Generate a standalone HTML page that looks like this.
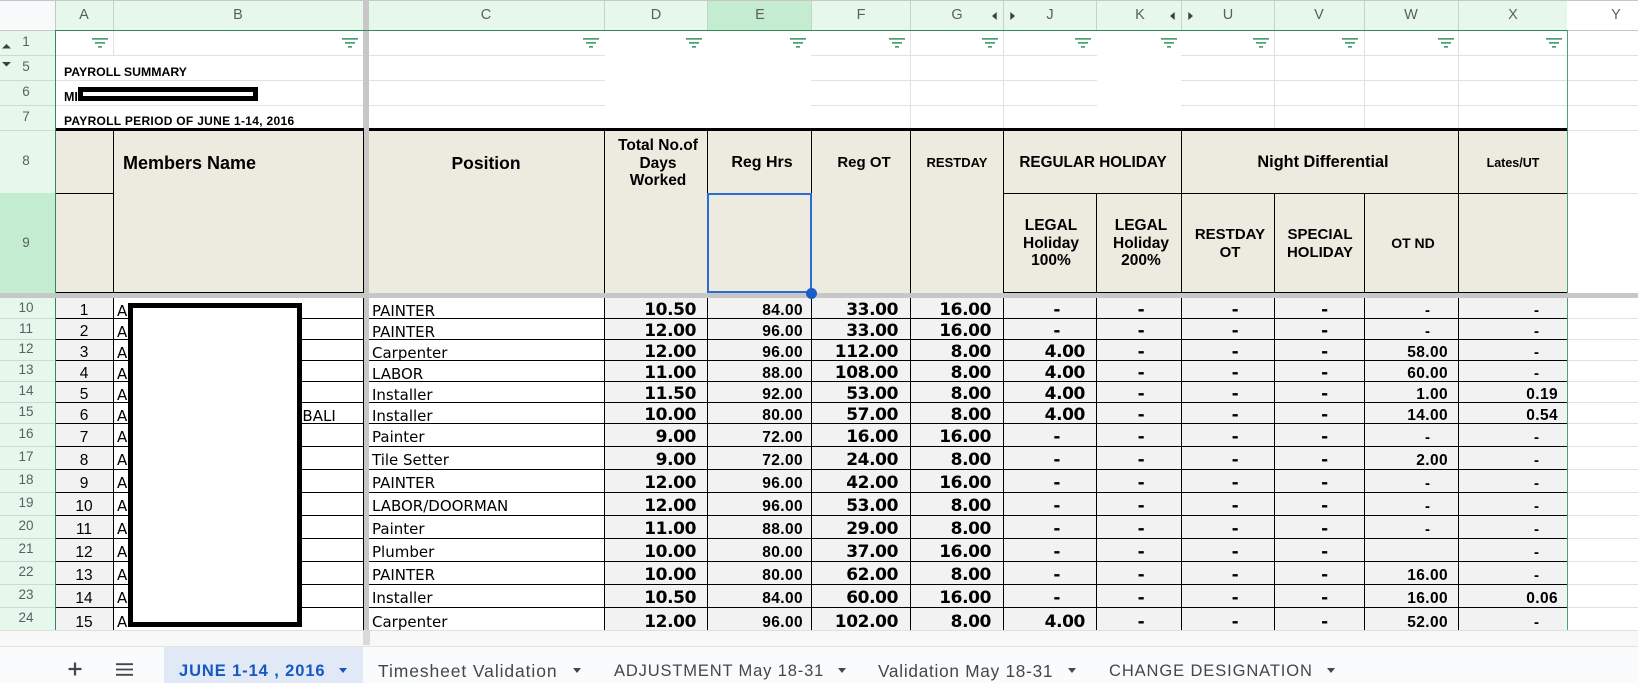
<!DOCTYPE html>
<html><head><meta charset="utf-8"><style>
html,body{margin:0;padding:0;background:#fff;width:1638px;height:683px;overflow:hidden}
body{position:relative;font-family:"Liberation Sans",sans-serif;color:#000}
div,span.t,svg{position:absolute}
.r{background:#e1e1e1}
.k{background:#000}
.t{white-space:nowrap;line-height:1;position:absolute}
.ch{top:8px;font-size:14.5px;color:#5b5f62;width:40px;text-align:center}
.rn{left:6px;width:40px;text-align:center;font-size:13.5px;color:#5b5f62;line-height:16px}
.b{font-weight:bold}
.hc{text-align:center;width:200px;font-weight:bold;font-size:15.5px;line-height:17.5px;white-space:nowrap}
table{position:absolute;left:55px;top:298px;border-collapse:separate;border-spacing:0;table-layout:fixed;width:1512px}
td{padding:0;border-bottom:1px solid #000;border-right:1px solid #000;background:#f2f2f2;vertical-align:bottom;line-height:14px;white-space:nowrap;overflow:hidden;box-sizing:border-box;text-align:right;font-weight:bold;font-size:17px;letter-spacing:-.4px;font-family:"DejaVu Sans",sans-serif}
tr.s td{height:21px;padding-bottom:1px}
tr.l td{height:23px;padding-bottom:2px}
tr.z td{height:23px;padding-bottom:2px;border-bottom:0}
td.a{text-align:center;letter-spacing:0;font:15.5px/14px "Liberation Sans",sans-serif}
td.n{background:#fff;text-align:left;padding-left:3px;letter-spacing:0;font:15px/14px "DejaVu Sans",sans-serif}
td.g{background:#c7c7c7;border:0}
td.dd{padding-right:11px}
td.e{padding-right:8px;font:bold 15.5px/14px "Liberation Sans",sans-serif;letter-spacing:.4px}
td.f{padding-right:12px}
td.gg{padding-right:12px}
td.j{padding-right:11px}
td.jd{padding-right:36px}
td.kk{text-align:center;padding-left:4px}
td.u{text-align:center;padding-left:14px}
td.v{text-align:center;padding-left:10px}
td.w{padding-right:10px;font:bold 15.5px/14px "Liberation Sans",sans-serif;letter-spacing:.4px}
td.wd{padding-right:28px;letter-spacing:0;font:bold 15px/14px "Liberation Sans",sans-serif}
td.x{padding-right:9px;border-right:0;font:bold 15.5px/14px "Liberation Sans",sans-serif;letter-spacing:.4px}
td.xd{padding-right:28px;border-right:0;letter-spacing:0;font:bold 15px/14px "Liberation Sans",sans-serif}
tr.s td.a,tr.s td.n,tr.s td.e,tr.s td.w,tr.s td.x,tr.s td.wd,tr.s td.xd{padding-bottom:0}
tr.l td.a,tr.l td.e,tr.l td.w,tr.l td.x,tr.l td.wd,tr.l td.xd,tr.z td.a,tr.z td.e,tr.z td.w,tr.z td.x,tr.z td.wd,tr.z td.xd{padding-bottom:1px}
tr.l td.n,tr.z td.n{padding-bottom:2px}
.tab{position:absolute;top:661px;font-size:16.5px;color:#444746;white-space:nowrap;line-height:20px}
.ar{width:0;height:0;border-left:4.5px solid transparent;border-right:4.5px solid transparent;border-top:5px solid #444746;top:668px}
</style></head><body>

<!-- column header -->
<div style="left:0;top:0;width:1638px;height:1px;background:#c7c7c7"></div>
<div style="left:0;top:1px;width:55px;height:29px;background:#f8f9fa"></div>
<div style="left:55px;top:1px;width:1512px;height:29px;background:#e6f7ec"></div>
<div style="left:708px;top:1px;width:103px;height:29px;background:#c3ecd0"></div>
<div style="left:0;top:30px;width:55px;height:1px;background:#c7c7c7"></div>
<div style="left:1567px;top:30px;width:71px;height:1px;background:#c7c7c7"></div>
<div style="left:55px;top:1px;width:1px;height:29px;background:#c4c8c6"></div>
<div style="left:113px;top:1px;width:1px;height:29px;background:#c4d4ca"></div>
<div style="left:604px;top:1px;width:1px;height:29px;background:#c4d4ca"></div>
<div style="left:707px;top:1px;width:1px;height:29px;background:#c4d4ca"></div>
<div style="left:811px;top:1px;width:1px;height:29px;background:#c4d4ca"></div>
<div style="left:910px;top:1px;width:1px;height:29px;background:#c4d4ca"></div>
<div style="left:1003px;top:1px;width:1px;height:29px;background:#c4d4ca"></div>
<div style="left:1096px;top:1px;width:1px;height:29px;background:#c4d4ca"></div>
<div style="left:1181px;top:1px;width:1px;height:29px;background:#c4d4ca"></div>
<div style="left:1274px;top:1px;width:1px;height:29px;background:#c4d4ca"></div>
<div style="left:1364px;top:1px;width:1px;height:29px;background:#c4d4ca"></div>
<div style="left:1458px;top:1px;width:1px;height:29px;background:#c4d4ca"></div>
<div style="left:363px;top:0;width:6px;height:293px;background:#c7c7c7"></div>

<span class="t ch" style="left:64px">A</span>
<span class="t ch" style="left:218px">B</span>
<span class="t ch" style="left:466px">C</span>
<span class="t ch" style="left:636px">D</span>
<span class="t ch" style="left:740px">E</span>
<span class="t ch" style="left:841px">F</span>
<span class="t ch" style="left:937px">G</span>
<span class="t ch" style="left:1030px">J</span>
<span class="t ch" style="left:1120px">K</span>
<span class="t ch" style="left:1208px">U</span>
<span class="t ch" style="left:1299px">V</span>
<span class="t ch" style="left:1391px">W</span>
<span class="t ch" style="left:1493px">X</span>
<span class="t ch" style="left:1596px">Y</span>

<svg style="left:992px;top:12px" width="5" height="8"><path d="M4.7 0V8L0 4z" fill="#3c4043"/></svg>
<svg style="left:1010px;top:12px" width="5" height="8"><path d="M.3 0V8L5 4z" fill="#3c4043"/></svg>
<svg style="left:1170px;top:12px" width="5" height="8"><path d="M4.7 0V8L0 4z" fill="#3c4043"/></svg>
<svg style="left:1188px;top:12px" width="5" height="8"><path d="M.3 0V8L5 4z" fill="#3c4043"/></svg>

<!-- row header -->
<div style="left:0;top:31px;width:55px;height:600px;background:#e6f7ec"></div>
<div style="left:0;top:193px;width:55px;height:100px;background:#c3ecd0"></div>
<div style="left:0;top:55px;width:55px;height:1px;background:#c9dccf"></div>
<div style="left:0;top:80px;width:55px;height:1px;background:#c9dccf"></div>
<div style="left:0;top:105px;width:55px;height:1px;background:#c9dccf"></div>
<div style="left:0;top:130px;width:55px;height:1px;background:#c9dccf"></div>
<div style="left:0;top:318px;width:55px;height:1px;background:#c9dccf"></div>
<div style="left:0;top:339px;width:55px;height:1px;background:#c9dccf"></div>
<div style="left:0;top:360px;width:55px;height:1px;background:#c9dccf"></div>
<div style="left:0;top:381px;width:55px;height:1px;background:#c9dccf"></div>
<div style="left:0;top:402px;width:55px;height:1px;background:#c9dccf"></div>
<div style="left:0;top:423px;width:55px;height:1px;background:#c9dccf"></div>
<div style="left:0;top:446px;width:55px;height:1px;background:#c9dccf"></div>
<div style="left:0;top:469px;width:55px;height:1px;background:#c9dccf"></div>
<div style="left:0;top:492px;width:55px;height:1px;background:#c9dccf"></div>
<div style="left:0;top:515px;width:55px;height:1px;background:#c9dccf"></div>
<div style="left:0;top:538px;width:55px;height:1px;background:#c9dccf"></div>
<div style="left:0;top:561px;width:55px;height:1px;background:#c9dccf"></div>
<div style="left:0;top:584px;width:55px;height:1px;background:#c9dccf"></div>
<div style="left:0;top:607px;width:55px;height:1px;background:#c9dccf"></div>

<span class="t rn" style="top:34px">1</span>
<span class="t rn" style="top:59px">5</span>
<span class="t rn" style="top:84px">6</span>
<span class="t rn" style="top:109px">7</span>
<span class="t rn" style="top:153px">8</span>
<span class="t rn" style="top:235px">9</span>
<span class="t rn" style="top:300px">10</span>
<span class="t rn" style="top:321px">11</span>
<span class="t rn" style="top:341px">12</span>
<span class="t rn" style="top:362px">13</span>
<span class="t rn" style="top:383px">14</span>
<span class="t rn" style="top:404px">15</span>
<span class="t rn" style="top:426px">16</span>
<span class="t rn" style="top:449px">17</span>
<span class="t rn" style="top:472px">18</span>
<span class="t rn" style="top:495px">19</span>
<span class="t rn" style="top:518px">20</span>
<span class="t rn" style="top:541px">21</span>
<span class="t rn" style="top:564px">22</span>
<span class="t rn" style="top:587px">23</span>
<span class="t rn" style="top:610px">24</span>

<svg style="left:2px;top:44px" width="10" height="5"><path d="M0 4.5H9L4.5 0z" fill="#3c4043"/></svg>
<svg style="left:2px;top:62px" width="10" height="5"><path d="M0 0H9L4.5 4.5z" fill="#3c4043"/></svg>

<!-- top gridlines -->
<div class="r" style="left:113px;top:31px;width:1px;height:24px"></div>
<div class="r" style="left:910px;top:31px;width:1px;height:97px"></div>
<div class="r" style="left:1003px;top:31px;width:1px;height:97px"></div>
<div class="r" style="left:1274px;top:31px;width:1px;height:97px"></div>
<div class="r" style="left:1364px;top:31px;width:1px;height:97px"></div>
<div class="r" style="left:1458px;top:31px;width:1px;height:97px"></div>
<div class="r" style="left:55px;top:55px;width:308px;height:1px"></div>
<div class="r" style="left:55px;top:80px;width:308px;height:1px"></div>
<div class="r" style="left:55px;top:105px;width:308px;height:1px"></div>
<div class="r" style="left:369px;top:55px;width:236px;height:1px"></div>
<div class="r" style="left:369px;top:80px;width:236px;height:1px"></div>
<div class="r" style="left:369px;top:105px;width:236px;height:1px"></div>
<div class="r" style="left:811px;top:55px;width:286px;height:1px"></div>
<div class="r" style="left:811px;top:80px;width:286px;height:1px"></div>
<div class="r" style="left:811px;top:105px;width:286px;height:1px"></div>
<div class="r" style="left:1181px;top:55px;width:457px;height:1px"></div>
<div class="r" style="left:1181px;top:80px;width:457px;height:1px"></div>
<div class="r" style="left:1181px;top:105px;width:457px;height:1px"></div>
<div class="r" style="left:1567px;top:130px;width:71px;height:1px"></div>
<div class="r" style="left:1567px;top:193px;width:71px;height:1px"></div>
<div class="r" style="left:1567px;top:318px;width:71px;height:1px"></div>
<div class="r" style="left:1567px;top:339px;width:71px;height:1px"></div>
<div class="r" style="left:1567px;top:360px;width:71px;height:1px"></div>
<div class="r" style="left:1567px;top:381px;width:71px;height:1px"></div>
<div class="r" style="left:1567px;top:402px;width:71px;height:1px"></div>
<div class="r" style="left:1567px;top:423px;width:71px;height:1px"></div>
<div class="r" style="left:1567px;top:446px;width:71px;height:1px"></div>
<div class="r" style="left:1567px;top:469px;width:71px;height:1px"></div>
<div class="r" style="left:1567px;top:492px;width:71px;height:1px"></div>
<div class="r" style="left:1567px;top:515px;width:71px;height:1px"></div>
<div class="r" style="left:1567px;top:538px;width:71px;height:1px"></div>
<div class="r" style="left:1567px;top:561px;width:71px;height:1px"></div>
<div class="r" style="left:1567px;top:584px;width:71px;height:1px"></div>
<div class="r" style="left:1567px;top:607px;width:71px;height:1px"></div>

<!-- filter icons -->
<svg width="0" height="0" style="left:0;top:0"><defs><g id="fi"><rect x="0" y="0" width="16" height="1.7" fill="#4a9f6e"/><rect x="3" y="4" width="10" height="1.7" fill="#4a9f6e"/><rect x="6" y="8" width="4" height="1.7" fill="#4a9f6e"/></g></defs></svg>
<svg style="left:92px;top:38px" width="16" height="10"><use href="#fi"/></svg>
<svg style="left:342px;top:38px" width="16" height="10"><use href="#fi"/></svg>
<svg style="left:583px;top:38px" width="16" height="10"><use href="#fi"/></svg>
<svg style="left:686px;top:38px" width="16" height="10"><use href="#fi"/></svg>
<svg style="left:790px;top:38px" width="16" height="10"><use href="#fi"/></svg>
<svg style="left:889px;top:38px" width="16" height="10"><use href="#fi"/></svg>
<svg style="left:982px;top:38px" width="16" height="10"><use href="#fi"/></svg>
<svg style="left:1075px;top:38px" width="16" height="10"><use href="#fi"/></svg>
<svg style="left:1161px;top:38px" width="16" height="10"><use href="#fi"/></svg>
<svg style="left:1253px;top:38px" width="16" height="10"><use href="#fi"/></svg>
<svg style="left:1342px;top:38px" width="16" height="10"><use href="#fi"/></svg>
<svg style="left:1438px;top:38px" width="16" height="10"><use href="#fi"/></svg>
<svg style="left:1546px;top:38px" width="16" height="10"><use href="#fi"/></svg>

<!-- title text -->
<span class="t b" style="left:64px;top:66px;font-size:12.3px;line-height:13px">PAYROLL SUMMARY</span>
<span class="t b" style="left:64px;top:91px;font-size:12.5px;line-height:13px">MI</span>
<span class="t b" style="left:64px;top:115px;font-size:12px;line-height:13px;letter-spacing:.3px">PAYROLL PERIOD OF JUNE 1-14, 2016</span>
<div style="left:78px;top:87px;width:170px;height:4px;border:5px solid #000;background:#fff"></div>

<!-- frozen header block -->
<div style="left:55px;top:130px;width:308px;height:163px;background:#edeae0"></div>
<div style="left:369px;top:130px;width:1198px;height:163px;background:#edeae0"></div>
<div class="k" style="left:55px;top:128px;width:309px;height:3px"></div>
<div class="k" style="left:369px;top:128px;width:1198px;height:3px"></div>

<div class="k" style="left:113px;top:131px;width:1px;height:162px"></div>
<div class="k" style="left:363px;top:131px;width:1px;height:162px"></div>
<div class="k" style="left:604px;top:131px;width:1px;height:162px"></div>
<div class="k" style="left:707px;top:131px;width:1px;height:62px"></div>
<div class="k" style="left:811px;top:131px;width:1px;height:162px"></div>
<div class="k" style="left:910px;top:131px;width:1px;height:162px"></div>
<div class="k" style="left:1003px;top:131px;width:1px;height:162px"></div>
<div class="k" style="left:1181px;top:131px;width:1px;height:162px"></div>
<div class="k" style="left:1458px;top:131px;width:1px;height:162px"></div>
<div class="k" style="left:1096px;top:193px;width:1px;height:100px"></div>
<div class="k" style="left:1274px;top:193px;width:1px;height:100px"></div>
<div class="k" style="left:1364px;top:193px;width:1px;height:100px"></div>
<div class="k" style="left:55px;top:193px;width:58px;height:1px"></div>
<div class="k" style="left:1003px;top:193px;width:564px;height:1px"></div>
<div class="k" style="left:55px;top:292px;width:309px;height:1px"></div>
<div class="k" style="left:1003px;top:292px;width:564px;height:1px"></div>

<span class="t b" style="left:123px;top:153px;font-size:18px;line-height:20px">Members Name</span>
<span class="t b" style="left:386px;top:153px;width:200px;text-align:center;font-size:17.5px;line-height:20px">Position</span>
<div class="hc" style="left:558px;top:137px">Total No.of<br>Days<br>Worked</div>
<div class="hc" style="left:662px;top:154px;font-size:16px">Reg Hrs</div>
<div class="hc" style="left:764px;top:154px;font-size:15px">Reg OT</div>
<div class="hc" style="left:857px;top:154px;font-size:13px">RESTDAY</div>
<div class="hc" style="left:993px;top:154px;font-size:15.3px">REGULAR HOLIDAY</div>
<div class="hc" style="left:1223px;top:154px;font-size:16.3px">Night Differential</div>
<div class="hc" style="left:1413px;top:155px;font-size:12.5px">Lates/UT</div>
<div class="hc" style="left:951px;top:217px">LEGAL<br>Holiday<br>100%</div>
<div class="hc" style="left:1041px;top:217px">LEGAL<br>Holiday<br>200%</div>
<div class="hc" style="left:1130px;top:226px;font-size:15px">RESTDAY<br>OT</div>
<div class="hc" style="left:1220px;top:226px;font-size:15px">SPECIAL<br>HOLIDAY</div>
<div class="hc" style="left:1313px;top:235px;font-size:14px">OT ND</div>

<!-- freeze stripe -->
<div style="left:0;top:293px;width:1638px;height:5px;background:#c7c7c7"></div>

<!-- data table -->
<table>
<colgroup><col style="width:59px"><col style="width:250px"><col style="width:5px"><col style="width:236px"><col style="width:103px"><col style="width:104px"><col style="width:99px"><col style="width:93px"><col style="width:93px"><col style="width:85px"><col style="width:93px"><col style="width:90px"><col style="width:94px"><col style="width:108px"></colgroup>
<tr class="s"><td class="a">1</td><td class="n">A</td><td class="g"></td><td class="n">PAINTER</td><td class="dd">10.50</td><td class="e">84.00</td><td class="f">33.00</td><td class="gg">16.00</td><td class="jd">-</td><td class="kk">-</td><td class="u">-</td><td class="v">-</td><td class="wd">-</td><td class="xd">-</td></tr>
<tr class="s"><td class="a">2</td><td class="n">A</td><td class="g"></td><td class="n">PAINTER</td><td class="dd">12.00</td><td class="e">96.00</td><td class="f">33.00</td><td class="gg">16.00</td><td class="jd">-</td><td class="kk">-</td><td class="u">-</td><td class="v">-</td><td class="wd">-</td><td class="xd">-</td></tr>
<tr class="s"><td class="a">3</td><td class="n">A</td><td class="g"></td><td class="n">Carpenter</td><td class="dd">12.00</td><td class="e">96.00</td><td class="f">112.00</td><td class="gg">8.00</td><td class="j">4.00</td><td class="kk">-</td><td class="u">-</td><td class="v">-</td><td class="w">58.00</td><td class="xd">-</td></tr>
<tr class="s"><td class="a">4</td><td class="n">A</td><td class="g"></td><td class="n">LABOR</td><td class="dd">11.00</td><td class="e">88.00</td><td class="f">108.00</td><td class="gg">8.00</td><td class="j">4.00</td><td class="kk">-</td><td class="u">-</td><td class="v">-</td><td class="w">60.00</td><td class="xd">-</td></tr>
<tr class="s"><td class="a">5</td><td class="n">A</td><td class="g"></td><td class="n">Installer</td><td class="dd">11.50</td><td class="e">92.00</td><td class="f">53.00</td><td class="gg">8.00</td><td class="j">4.00</td><td class="kk">-</td><td class="u">-</td><td class="v">-</td><td class="w">1.00</td><td class="x">0.19</td></tr>
<tr class="s"><td class="a">6</td><td class="n">A<span style="position:absolute;left:237px">RBALI</span></td><td class="g"></td><td class="n">Installer</td><td class="dd">10.00</td><td class="e">80.00</td><td class="f">57.00</td><td class="gg">8.00</td><td class="j">4.00</td><td class="kk">-</td><td class="u">-</td><td class="v">-</td><td class="w">14.00</td><td class="x">0.54</td></tr>
<tr class="l"><td class="a">7</td><td class="n">A</td><td class="g"></td><td class="n">Painter</td><td class="dd">9.00</td><td class="e">72.00</td><td class="f">16.00</td><td class="gg">16.00</td><td class="jd">-</td><td class="kk">-</td><td class="u">-</td><td class="v">-</td><td class="wd">-</td><td class="xd">-</td></tr>
<tr class="l"><td class="a">8</td><td class="n">A</td><td class="g"></td><td class="n">Tile Setter</td><td class="dd">9.00</td><td class="e">72.00</td><td class="f">24.00</td><td class="gg">8.00</td><td class="jd">-</td><td class="kk">-</td><td class="u">-</td><td class="v">-</td><td class="w">2.00</td><td class="xd">-</td></tr>
<tr class="l"><td class="a">9</td><td class="n">A</td><td class="g"></td><td class="n">PAINTER</td><td class="dd">12.00</td><td class="e">96.00</td><td class="f">42.00</td><td class="gg">16.00</td><td class="jd">-</td><td class="kk">-</td><td class="u">-</td><td class="v">-</td><td class="wd">-</td><td class="xd">-</td></tr>
<tr class="l"><td class="a">10</td><td class="n">A</td><td class="g"></td><td class="n">LABOR/DOORMAN</td><td class="dd">12.00</td><td class="e">96.00</td><td class="f">53.00</td><td class="gg">8.00</td><td class="jd">-</td><td class="kk">-</td><td class="u">-</td><td class="v">-</td><td class="wd">-</td><td class="xd">-</td></tr>
<tr class="l"><td class="a">11</td><td class="n">A</td><td class="g"></td><td class="n">Painter</td><td class="dd">11.00</td><td class="e">88.00</td><td class="f">29.00</td><td class="gg">8.00</td><td class="jd">-</td><td class="kk">-</td><td class="u">-</td><td class="v">-</td><td class="wd">-</td><td class="xd">-</td></tr>
<tr class="l"><td class="a">12</td><td class="n">A</td><td class="g"></td><td class="n">Plumber</td><td class="dd">10.00</td><td class="e">80.00</td><td class="f">37.00</td><td class="gg">16.00</td><td class="jd">-</td><td class="kk">-</td><td class="u">-</td><td class="v">-</td><td class="wd"></td><td class="xd">-</td></tr>
<tr class="l"><td class="a">13</td><td class="n">A</td><td class="g"></td><td class="n">PAINTER</td><td class="dd">10.00</td><td class="e">80.00</td><td class="f">62.00</td><td class="gg">8.00</td><td class="jd">-</td><td class="kk">-</td><td class="u">-</td><td class="v">-</td><td class="w">16.00</td><td class="xd">-</td></tr>
<tr class="l"><td class="a">14</td><td class="n">A</td><td class="g"></td><td class="n">Installer</td><td class="dd">10.50</td><td class="e">84.00</td><td class="f">60.00</td><td class="gg">16.00</td><td class="jd">-</td><td class="kk">-</td><td class="u">-</td><td class="v">-</td><td class="w">16.00</td><td class="x">0.06</td></tr>
<tr class="z"><td class="a">15</td><td class="n">A</td><td class="g"></td><td class="n">Carpenter</td><td class="dd">12.00</td><td class="e">96.00</td><td class="f">102.00</td><td class="gg">8.00</td><td class="j">4.00</td><td class="kk">-</td><td class="u">-</td><td class="v">-</td><td class="w">52.00</td><td class="xd">-</td></tr>
</table>

<!-- redaction -->
<div style="left:128px;top:303px;width:164px;height:314px;border:5px solid #000;background:#fff"></div>

<!-- green frame -->
<div style="left:55px;top:30px;width:1512px;height:1px;background:#2f8a57"></div>
<div style="left:55px;top:30px;width:1px;height:263px;background:#2f8a57"></div>
<div style="left:55px;top:298px;width:1px;height:332px;background:#2f8a57"></div>
<div style="left:1567px;top:30px;width:1px;height:263px;background:#4da36f"></div>
<div style="left:1567px;top:298px;width:1px;height:332px;background:#4da36f"></div>

<!-- selection -->
<div style="left:707px;top:193px;width:101px;height:96px;border:2px solid #2a6fd0"></div>
<div style="left:806px;top:288px;width:11px;height:11px;border-radius:50%;background:#1a5fc8"></div>

<!-- bottom band -->
<div style="left:0;top:630px;width:1638px;height:1px;background:#e0e0e0"></div>
<div style="left:0;top:631px;width:1638px;height:15px;background:#f8f8f8"></div>
<div style="left:363px;top:630px;width:7px;height:15px;background:#d9dadc"></div>
<div style="left:0;top:646px;width:1638px;height:1px;background:#e3e3e3"></div>
<div style="left:0;top:647px;width:1638px;height:36px;background:#f9fbfd"></div>
<div style="left:164px;top:647px;width:199px;height:36px;background:#e1e9f7"></div>

<svg style="left:67px;top:661px" width="16" height="16"><path d="M8 1.5V14.5M1.5 8H14.5" stroke="#444746" stroke-width="2.2" fill="none"/></svg>
<svg style="left:115px;top:662px" width="19" height="15"><path d="M1 2.2H18M1 7.5H18M1 12.8H18" stroke="#444746" stroke-width="1.8" fill="none"/></svg>

<span class="tab" style="left:179px;color:#1558c0;font-weight:bold;letter-spacing:.9px">JUNE 1-14 , 2016</span>
<div class="ar" style="left:339px;border-top-color:#1558c0"></div>
<span class="tab" style="left:378px;font-size:17.5px;letter-spacing:.9px">Timesheet Validation</span>
<div class="ar" style="left:573px"></div>
<span class="tab" style="left:614px;letter-spacing:.85px">ADJUSTMENT May 18-31</span>
<div class="ar" style="left:838px"></div>
<span class="tab" style="left:878px;font-size:17.2px;letter-spacing:.75px">Validation May 18-31</span>
<div class="ar" style="left:1068px"></div>
<span class="tab" style="left:1109px;letter-spacing:.9px">CHANGE DESIGNATION</span>
<div class="ar" style="left:1327px"></div>
</body></html>
